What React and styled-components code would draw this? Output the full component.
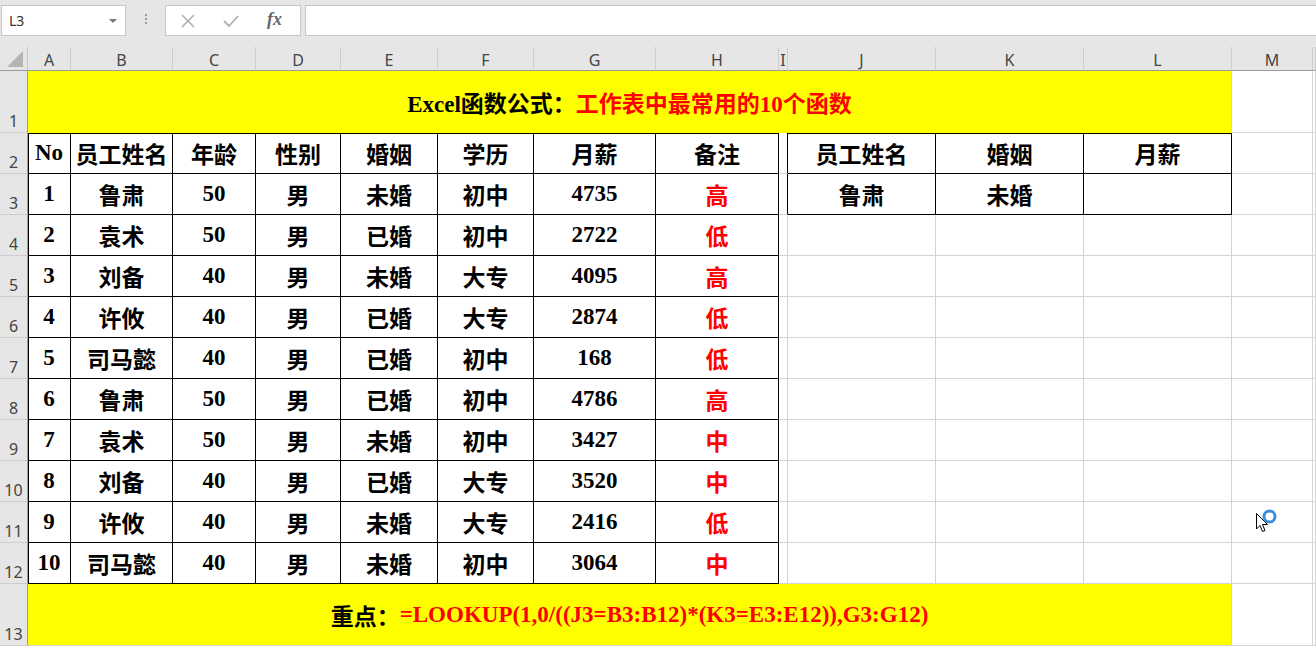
import React from "react";
import styled, { createGlobalStyle } from "styled-components";

const GlobalStyle = createGlobalStyle`
  html, body {
    margin: 0;
    padding: 0;
    background: #e6e6e6;
    overflow: hidden;
  }
  * {
    box-sizing: border-box;
  }
`;

const Page = styled.div`
  position: relative;
  width: 1316px;
  height: 646px;
  overflow: hidden;
  background: #e6e6e6;
`;

const FormulaBar = styled.div`
  display: flex;
  align-items: flex-start;
  height: 47px;
  padding-top: 5px;
`;

const NameBox = styled.div`
  display: flex;
  align-items: center;
  justify-content: space-between;
  width: 125px;
  height: 31px;
  margin-left: 1px;
  padding: 0 8px 0 7px;
  background: #fff;
  border: 1px solid #c6c6c6;
  font-family: "Noto Sans", "Liberation Sans", sans-serif;
  font-size: 14px;
  color: #333;
`;

const Caret = styled.span`
  width: 0;
  height: 0;
  border-left: 4px solid transparent;
  border-right: 4px solid transparent;
  border-top: 4px solid #777;
`;

const Grip = styled.div`
  display: flex;
  flex-direction: column;
  gap: 2px;
  width: 39px;
  align-items: center;
  padding-top: 9px;
  span {
    width: 2px;
    height: 2px;
    background: #9a9a9a;
  }
`;

const ButtonBox = styled.div`
  display: flex;
  align-items: center;
  width: 136px;
  height: 31px;
  padding-left: 14px;
  gap: 26px;
  background: #fff;
  border: 1px solid #c6c6c6;
`;

const Fx = styled.span`
  font-family: "Liberation Serif", serif;
  font-style: italic;
  font-weight: bold;
  font-size: 18px;
  color: #666;
  margin-left: 1px;
  margin-top: -2px;
`;

const FormulaInput = styled.div`
  flex: 1;
  height: 31px;
  margin-left: 4px;
  background: #fff;
  border: 1px solid #c6c6c6;
  border-right: none;
`;

const Sheet = styled.div`
  display: grid;
  grid-template-columns: 28px 43px 102px 83px 85px 97px 96px 122px 123px 9px 148px 148px 148px 81px 1fr;
  grid-template-rows: 24px 62px repeat(11, 41px) 62px;
  background: #fff;
`;

const Corner = styled.div`
  position: relative;
  background: #e6e6e6;
  border-right: 1px solid #c6c6c6;
  border-bottom: 1px solid #9b9b9b;
  &::after {
    content: "";
    position: absolute;
    right: 4px;
    bottom: 3px;
    width: 0;
    height: 0;
    border-left: 16px solid transparent;
    border-bottom: 16px solid #b4b4b4;
  }
`;

const ColHead = styled.div`
  display: flex;
  align-items: center;
  justify-content: center;
  padding-top: 2px;
  background: #e6e6e6;
  border-right: 1px solid #cdcdcd;
  border-bottom: 1px solid #9b9b9b;
  font-family: "Noto Sans", "Liberation Sans", sans-serif;
  font-size: 16px;
  color: #444;
  overflow: hidden;
`;

const RowHead = styled.div`
  display: flex;
  align-items: flex-end;
  justify-content: center;
  padding-bottom: 1px;
  background: #e6e6e6;
  border-right: 1px solid #9b9b9b;
  border-bottom: 1px solid #cdcdcd;
  font-family: "Noto Sans", "Liberation Sans", sans-serif;
  font-size: 16px;
  line-height: 20px;
  color: #444;
`;

const Cell = styled.div`
  display: flex;
  align-items: center;
  justify-content: center;
  grid-column: ${(p) => p.$span || "auto"};
  background: ${(p) => p.$bg || "#fff"};
  border-right: 1px solid ${(p) => p.$r || "#d4d4d4"};
  border-bottom: 1px solid ${(p) => p.$b || "#d4d4d4"};
  box-shadow: ${(p) => p.$shadow || "none"};
  font-family: "Liberation Serif", "Noto Sans CJK SC", serif;
  font-weight: bold;
  font-size: 23px;
  color: ${(p) => p.$color || "#000"};
  white-space: nowrap;
  overflow: hidden;
`;

const Red = styled.span`
  color: #ff0000;
`;

const Pointer = styled.svg`
  position: absolute;
  left: 1254px;
  top: 507px;
`;

const columns = ["A", "B", "C", "D", "E", "F", "G", "H", "I", "J", "K", "L", "M", ""];

const header = ["No", "员工姓名", "年龄", "性别", "婚姻", "学历", "月薪", "备注"];

const rows = [
  ["1", "鲁肃", "50", "男", "未婚", "初中", "4735", "高"],
  ["2", "袁术", "50", "男", "已婚", "初中", "2722", "低"],
  ["3", "刘备", "40", "男", "未婚", "大专", "4095", "高"],
  ["4", "许攸", "40", "男", "已婚", "大专", "2874", "低"],
  ["5", "司马懿", "40", "男", "已婚", "初中", "168", "低"],
  ["6", "鲁肃", "50", "男", "已婚", "初中", "4786", "高"],
  ["7", "袁术", "50", "男", "未婚", "初中", "3427", "中"],
  ["8", "刘备", "40", "男", "已婚", "大专", "3520", "中"],
  ["9", "许攸", "40", "男", "未婚", "大专", "2416", "低"],
  ["10", "司马懿", "40", "男", "未婚", "初中", "3064", "中"],
];

const lookup = [
  ["员工姓名", "婚姻", "月薪"],
  ["鲁肃", "未婚", ""],
];

const tableShadow = (isFirstRow, isFirstCol) => {
  const parts = [];
  if (isFirstRow) parts.push("inset 0 1px 0 #000");
  if (isFirstCol) parts.push("inset 1px 0 0 #000");
  return parts.length ? parts.join(", ") : "none";
};

const App = () => {
  const bodyRows = [header, ...rows];

  return (
    <Page>
      <GlobalStyle />
      <FormulaBar>
        <NameBox>
          L3
          <Caret />
        </NameBox>
        <Grip>
          <span />
          <span />
          <span />
        </Grip>
        <ButtonBox>
          <svg width="16" height="16" viewBox="0 0 16 16">
            <path d="M2 2 L14 14 M14 2 L2 14" stroke="#b0b0b0" strokeWidth="1.6" fill="none" />
          </svg>
          <svg width="18" height="16" viewBox="0 0 18 16">
            <path d="M2 8 L7 13 L16 3" stroke="#b0b0b0" strokeWidth="1.8" fill="none" />
          </svg>
          <Fx>fx</Fx>
        </ButtonBox>
        <FormulaInput />
      </FormulaBar>

      <Sheet>
        <Corner />
        {columns.map((c, i) => (
          <ColHead key={i}>{c}</ColHead>
        ))}

        <RowHead>1</RowHead>
        <Cell $span="span 12" $bg="#ffff00" $b="#ffff00" $r="#d4d4d4">
          Excel函数公式：<Red>工作表中最常用的10个函数</Red>
        </Cell>
        <Cell />
        <Cell />

        {bodyRows.map((r, ri) => {
          const rowNo = ri + 2;
          const side = lookup[ri];
          return (
            <React.Fragment key={ri}>
              <RowHead>{rowNo}</RowHead>
              {r.map((v, ci) => (
                <Cell
                  key={ci}
                  $r="#000"
                  $b="#000"
                  $shadow={tableShadow(ri === 0, ci === 0)}
                  $color={ci === 7 && ri > 0 ? "#ff0000" : "#000"}
                >
                  {v}
                </Cell>
              ))}
              <Cell $r={side ? "#000" : "#d4d4d4"} />
              {[0, 1, 2].map((k) => (
                <Cell
                  key={"s" + k}
                  $r={side ? "#000" : "#d4d4d4"}
                  $b={side ? "#000" : "#d4d4d4"}
                  $shadow={ri === 0 ? "inset 0 1px 0 #000" : "none"}
                >
                  {side ? side[k] : ""}
                </Cell>
              ))}
              <Cell />
              <Cell />
            </React.Fragment>
          );
        })}

        <RowHead>13</RowHead>
        <Cell $span="span 12" $bg="#ffff00" $r="#d4d4d4">
          重点：<Red>=LOOKUP(1,0/((J3=B3:B12)*(K3=E3:E12)),G3:G12)</Red>
        </Cell>
        <Cell />
        <Cell />
      </Sheet>

      <Pointer width="26" height="30" viewBox="0 0 26 30">
        <path
          d="M2.5 6.5 L2.5 22 L6 18.5 L8.5 24.5 L11 23.5 L8.5 17.5 L13.5 17.5 Z"
          fill="#fff"
          stroke="#000"
          strokeWidth="1"
          strokeLinejoin="round"
        />
        <circle cx="15.5" cy="9.5" r="5.5" fill="none" stroke="#3a8fdc" strokeWidth="3" />
      </Pointer>
    </Page>
  );
};

export default App;
